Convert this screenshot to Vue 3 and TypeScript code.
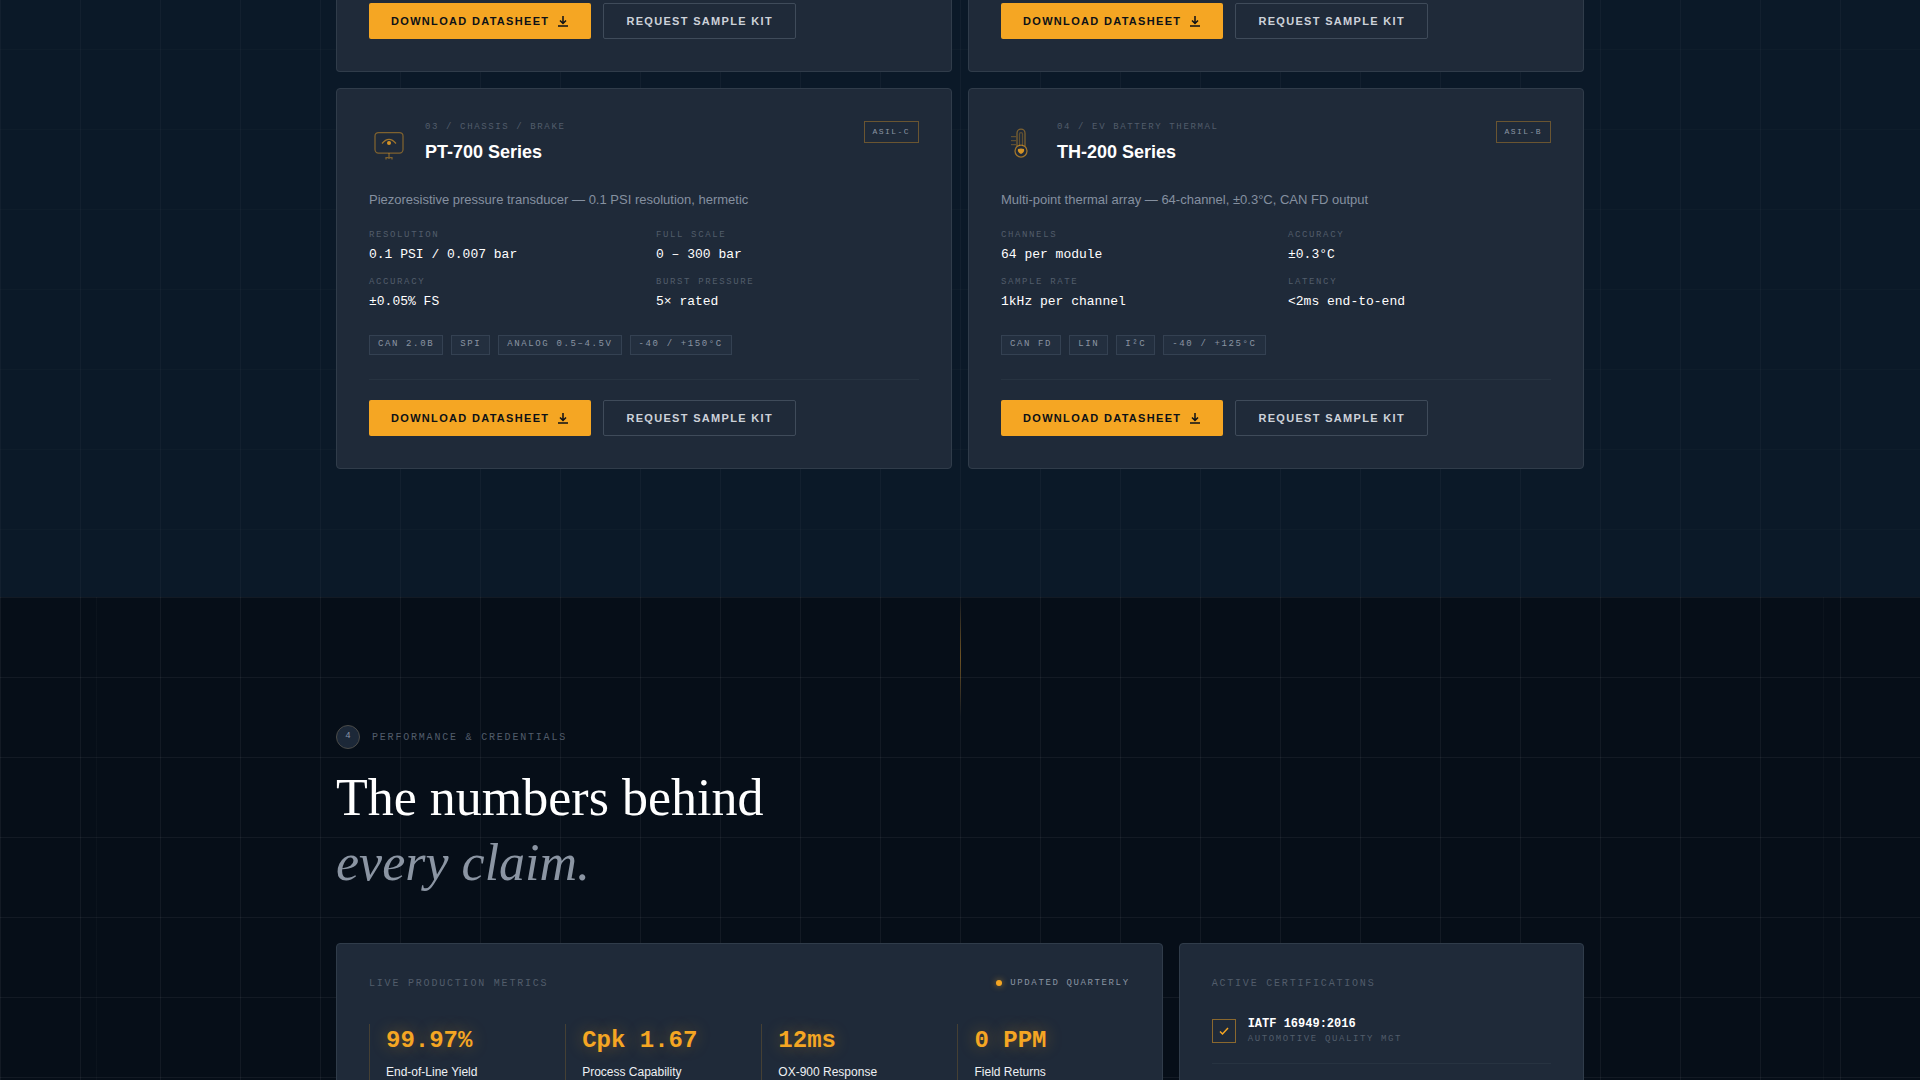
<script setup lang="ts">
interface Spec {
  label: string
  value: string
}

interface Product {
  id: string
  icon: 'pressure' | 'thermal'
  category: string
  name: string
  rating: string
  summary: string
  specs: Spec[]
  tags: string[]
}

const products: Product[] = [
  {
    id: 'pt-700',
    icon: 'pressure',
    category: '03 / CHASSIS / BRAKE',
    name: 'PT-700 Series',
    rating: 'ASIL-C',
    summary: 'Piezoresistive pressure transducer — 0.1 PSI resolution, hermetic',
    specs: [
      { label: 'RESOLUTION', value: '0.1 PSI / 0.007 bar' },
      { label: 'FULL SCALE', value: '0 – 300 bar' },
      { label: 'ACCURACY', value: '±0.05% FS' },
      { label: 'BURST PRESSURE', value: '5× rated' },
    ],
    tags: ['CAN 2.0B', 'SPI', 'ANALOG 0.5–4.5V', '-40 / +150°C'],
  },
  {
    id: 'th-200',
    icon: 'thermal',
    category: '04 / EV BATTERY THERMAL',
    name: 'TH-200 Series',
    rating: 'ASIL-B',
    summary: 'Multi-point thermal array — 64-channel, ±0.3°C, CAN FD output',
    specs: [
      { label: 'CHANNELS', value: '64 per module' },
      { label: 'ACCURACY', value: '±0.3°C' },
      { label: 'SAMPLE RATE', value: '1kHz per channel' },
      { label: 'LATENCY', value: '<2ms end-to-end' },
    ],
    tags: ['CAN FD', 'LIN', 'I²C', '-40 / +125°C'],
  },
]

const metrics: Spec[] = [
  { value: '99.97%', label: 'End-of-Line Yield' },
  { value: 'Cpk 1.67', label: 'Process Capability' },
  { value: '12ms', label: 'OX-900 Response' },
  { value: '0 PPM', label: 'Field Returns' },
]

const certifications = [{ name: 'IATF 16949:2016', scope: 'AUTOMOTIVE QUALITY MGT' }]
</script>

<template>
  <main class="page">
    <section class="products">
      <div class="container product-grid">
        <article v-for="n in 2" :key="n" class="card card-tail">
          <div class="actions">
            <button type="button" class="btn btn-primary">
              DOWNLOAD DATASHEET
              <svg class="btn-icon" viewBox="0 0 12 12" aria-hidden="true">
                <path d="M6 1v7M3 5.5l3 3 3-3M1 11h10" />
              </svg>
            </button>
            <button type="button" class="btn btn-outline">REQUEST SAMPLE KIT</button>
          </div>
        </article>

        <article v-for="product in products" :key="product.id" class="card">
          <header class="product-head">
            <svg v-if="product.icon === 'pressure'" class="product-icon" viewBox="0 0 40 40" aria-hidden="true">
              <rect class="dim" x="6" y="8.5" width="28" height="20.5" rx="3.5" />
              <path class="dim" d="M20 29v6M17 35.5v-2h6v2" />
              <path class="mid" d="M13 19.5Q20 11 27 19.5" />
              <circle class="fill" cx="20" cy="19" r="2" />
            </svg>
            <svg v-else class="product-icon" viewBox="0 0 40 40" aria-hidden="true">
              <path class="dim" d="M16 22V9a4 4 0 0 1 8 0v13" />
              <path class="faint" d="M18.5 22V10a1.5 1.5 0 0 1 3 0v12" />
              <circle class="mid" cx="20" cy="27" r="6" />
              <path class="fill" d="M17 25q3-1 6 0q1 3-3 5q-4-2-3-5z" />
              <path class="faint" d="M10 12.500H15M10 16.500H15M10 20.500H15" />
            </svg>
            <div class="product-title">
              <p class="micro">{{ product.category }}</p>
              <h3>{{ product.name }}</h3>
            </div>
            <span class="rating">{{ product.rating }}</span>
          </header>

          <p class="summary">{{ product.summary }}</p>

          <dl class="specs">
            <div v-for="spec in product.specs" :key="spec.label">
              <dt class="micro">{{ spec.label }}</dt>
              <dd>{{ spec.value }}</dd>
            </div>
          </dl>

          <ul class="tags">
            <li v-for="tag in product.tags" :key="tag">{{ tag }}</li>
          </ul>

          <div class="actions actions-ruled">
            <button type="button" class="btn btn-primary">
              DOWNLOAD DATASHEET
              <svg class="btn-icon" viewBox="0 0 12 12" aria-hidden="true">
                <path d="M6 1v7M3 5.5l3 3 3-3M1 11h10" />
              </svg>
            </button>
            <button type="button" class="btn btn-outline">REQUEST SAMPLE KIT</button>
          </div>
        </article>
      </div>
    </section>

    <section class="performance">
      <div class="container">
        <div class="eyebrow">
          <span class="step">4</span>
          <span class="overline">PERFORMANCE &amp; CREDENTIALS</span>
        </div>
        <h2>The numbers behind<br /><em>every claim.</em></h2>

        <div class="panel-grid">
          <article class="card panel-metrics">
            <header class="panel-head">
              <span class="overline">LIVE PRODUCTION METRICS</span>
              <span class="updated"><i class="pulse"></i>UPDATED QUARTERLY</span>
            </header>
            <div class="metrics">
              <div v-for="metric in metrics" :key="metric.label" class="metric">
                <p class="metric-value">{{ metric.value }}</p>
                <p class="metric-label">{{ metric.label }}</p>
              </div>
            </div>
          </article>

          <article class="card panel-certs">
            <header class="panel-head">
              <span class="overline">ACTIVE CERTIFICATIONS</span>
            </header>
            <ul class="certs">
              <li v-for="cert in certifications" :key="cert.name">
                <span class="check">
                  <svg viewBox="0 0 10 10" aria-hidden="true"><path d="M1 5.5l2.500 2.500L9 2" /></svg>
                </span>
                <div>
                  <p class="cert-name">{{ cert.name }}</p>
                  <p class="micro">{{ cert.scope }}</p>
                </div>
              </li>
            </ul>
          </article>
        </div>
      </div>
    </section>
  </main>
</template>

<style>
body {
  margin: 0;
  background: #060e18;
}
</style>

<style scoped>
.page {
  --amber: #f5a623;
  --mono: "Liberation Mono", monospace;
  --grey: #8b95a3;
  --dim: #525d6b;
  height: 100vh;
  overflow: hidden;
  color: #fff;
  font-family: "Liberation Sans", Arial, sans-serif;
}

p,
h2,
h3,
dl,
dd,
ul {
  margin: 0;
  padding: 0;
}

ul {
  list-style: none;
}

.container {
  max-width: 1248px;
  margin: 0 auto;
}

.products {
  padding-bottom: 128px;
  background:
    linear-gradient(rgba(255, 255, 255, 0.016) 1px, transparent 1px) 0 49px / 80px 80px,
    linear-gradient(90deg, rgba(255, 255, 255, 0.03) 1px, transparent 1px) 0 0 / 80px 80px,
    #0b1928;
}

.product-grid {
  display: grid;
  grid-template-columns: 1fr 1fr;
  gap: 16px;
}

.card {
  padding: 32px;
  border: 1px solid #303c4a;
  border-radius: 4px;
  background: #1f2a39;
}

.card-tail {
  padding-top: 3px;
  border-top: 0;
  border-radius: 0 0 4px 4px;
}

.micro {
  color: var(--dim);
  font: 9px/12px var(--mono);
  letter-spacing: 0.18em;
}

.overline {
  padding-top: 2px;
  color: var(--dim);
  font: 10px/12px var(--mono);
  letter-spacing: 0.18em;
}

.product-head {
  display: flex;
  align-items: flex-start;
  gap: 16px;
  margin-bottom: 24px;
}

.product-icon {
  align-self: center;
  width: 40px;
  height: 40px;
  fill: none;
  stroke: var(--amber);
  stroke-width: 1.25;
}

.product-icon .dim {
  opacity: 0.45;
}

.product-icon .mid {
  opacity: 0.6;
}

.product-icon .faint {
  opacity: 0.3;
}

.product-icon .fill {
  fill: var(--amber);
  stroke: none;
  opacity: 0.85;
}

.product-title {
  flex: 1;
}

h3 {
  margin-top: 4px;
  font-size: 18px;
  line-height: 30px;
}

.rating {
  padding: 4px 8px;
  border: 1px solid rgba(245, 166, 35, 0.35);
  color: var(--grey);
  font: 8px/12px var(--mono);
  letter-spacing: 0.18em;
}

.summary {
  margin-bottom: 20px;
  color: #8590a0;
  font-size: 13px;
  line-height: 18px;
}

.specs {
  display: grid;
  grid-template-columns: 1fr 1fr;
  gap: 12px 24px;
  margin-bottom: 24px;
}

.specs dd {
  margin-top: 4px;
  font: 13px/19px var(--mono);
}

.tags {
  display: flex;
  gap: 8px;
  margin-bottom: 24px;
}

.tags li {
  padding: 2px 8px 4px;
  border: 1px solid #344152;
  background: #232f3f;
  color: var(--grey);
  font: 9px/12px var(--mono);
  letter-spacing: 0.18em;
}

.actions {
  display: flex;
  gap: 12px;
}

.actions-ruled {
  padding-top: 20px;
  border-top: 1px solid #273341;
}

.btn {
  display: flex;
  align-items: center;
  gap: 8px;
  height: 36px;
  padding: 0 22px;
  border: 0;
  border-radius: 2px;
  font: bold 11px/16px "Liberation Sans", Arial, sans-serif;
  letter-spacing: 0.12em;
  cursor: pointer;
}

.btn-primary {
  background: var(--amber);
  color: #0d1117;
}

.btn-outline {
  border: 1px solid #3f4b5a;
  background: transparent;
  color: #cdd2d9;
}

.btn-icon {
  width: 12px;
  height: 12px;
  fill: none;
  stroke: currentColor;
  stroke-width: 1.5;
}

.performance {
  position: relative;
  padding: 128px 0;
  background:
    linear-gradient(rgba(255, 255, 255, 0.05) 1px, transparent 1px) 0 0 / 80px 80px,
    linear-gradient(90deg, rgba(255, 255, 255, 0.05) 1px, transparent 1px) 0 0 / 80px 80px,
    linear-gradient(rgba(255, 255, 255, 0.025), rgba(255, 255, 255, 0.025)) 5% 0 / 1px 100% no-repeat,
    linear-gradient(rgba(255, 255, 255, 0.025), rgba(255, 255, 255, 0.025)) 95% 0 / 1px 100% no-repeat,
    #060e18;
}

/* Amber thread that drops from the section edge */
.performance::before {
  content: "";
  position: absolute;
  top: 0;
  left: 50%;
  width: 1px;
  height: 120px;
  background: linear-gradient(transparent, rgba(245, 166, 35, 0.4), transparent);
}

.eyebrow {
  display: flex;
  align-items: center;
  gap: 12px;
  margin-bottom: 16px;
}

.step {
  box-sizing: border-box;
  width: 24px;
  height: 24px;
  border: 1px solid #4b4b48;
  border-radius: 50%;
  background: #1c2838;
  color: #8795a8;
  font: 9px/20px var(--mono);
  text-align: center;
}

h2 {
  margin-bottom: 48px;
  font: 52px/65px "Liberation Serif", "Times New Roman", serif;
}

h2 em {
  color: #8b95a3;
}

.panel-grid {
  display: grid;
  grid-template-columns: repeat(12, 1fr);
  gap: 16px;
}

.panel-metrics {
  grid-column: span 8;
}

.panel-certs {
  grid-column: span 4;
}

.panel-head {
  display: flex;
  align-items: center;
  justify-content: space-between;
}

.updated {
  display: flex;
  align-items: center;
  gap: 8px;
  color: var(--grey);
  font: 9px/12px var(--mono);
  letter-spacing: 0.18em;
}

.pulse {
  width: 6px;
  height: 6px;
  border-radius: 50%;
  background: var(--amber);
  box-shadow: 0 0 6px rgba(245, 166, 35, 0.6);
}

.metrics {
  display: grid;
  grid-template-columns: repeat(4, 1fr);
  gap: 24px;
  margin-top: 34px;
}

.metric {
  padding-left: 16px;
  border-left: 1px solid rgba(245, 166, 35, 0.18);
}

.metric-value {
  color: var(--amber);
  font: bold 24px/34px var(--mono);
  text-shadow: 0 0 16px rgba(245, 166, 35, 0.35);
}

.metric-label {
  margin-top: 6px;
  color: #eef0f3;
  font-size: 12px;
  line-height: 16px;
}

.certs {
  margin-top: 27px;
}

.certs li {
  display: flex;
  align-items: center;
  gap: 12px;
  padding-bottom: 18px;
  border-bottom: 1px solid #273341;
}

.check {
  display: grid;
  place-items: center;
  box-sizing: border-box;
  width: 24px;
  height: 24px;
  border: 1px solid rgba(245, 166, 35, 0.5);
}

.check svg {
  width: 10px;
  height: 10px;
  fill: none;
  stroke: var(--amber);
  stroke-width: 1.5;
}

.cert-name {
  margin-bottom: 2px;
  font: bold 12px/14px var(--mono);
}
</style>
